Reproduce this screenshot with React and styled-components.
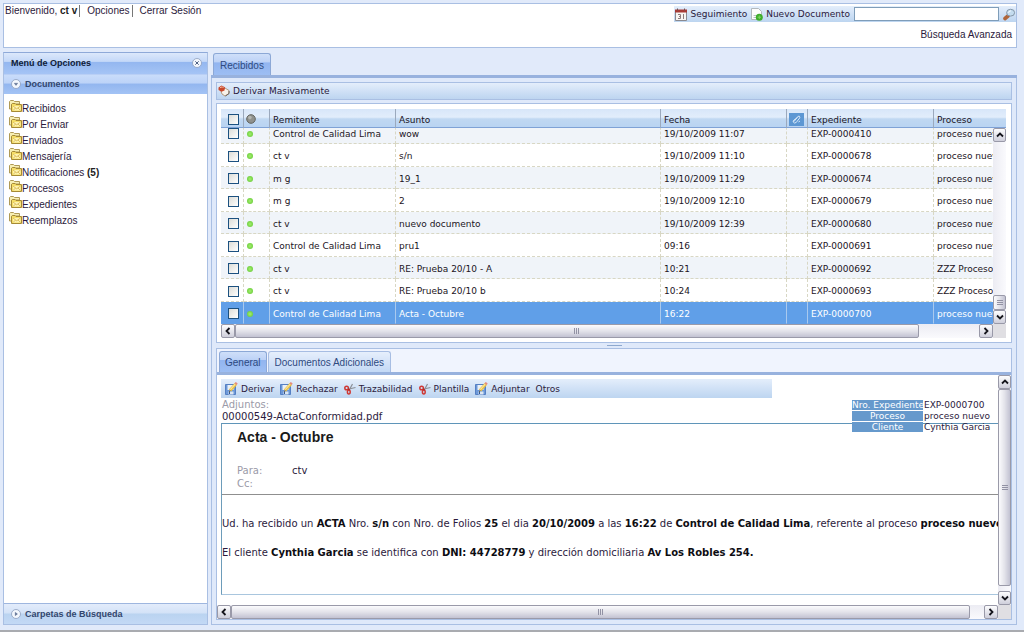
import React, { useLayoutEffect, useRef } from "react";
import styled, { createGlobalStyle } from "styled-components";

const arial = '"Liberation Sans", Arial, sans-serif';
const verdana = '"DejaVu Sans", Verdana, sans-serif';
const line = "#a9bfe3";
const barFill = "linear-gradient(#e4eefb, #d0e1f6 50%, #bdd5f0)";

const GlobalStyle = createGlobalStyle`
  * { box-sizing: border-box; }
  body { margin: 0; background: #e1eafa; font-family: ${arial}; font-size: 10px; line-height: 12px; color: #2b1a3c; }
  button { font: inherit; color: inherit; background: none; border: 0; padding: 0; cursor: pointer; }
  a { color: inherit; text-decoration: none; }
  h1, h2, p, dl, dd, dt, ul { margin: 0; padding: 0; }
`;

const Page = styled.div`
  display: flex;
  flex-direction: column;
  gap: 4px;
  min-height: 100vh;
  padding: 3px 7px 5px 3px;
  border-bottom: 2px solid #a9abb0;
`;

const Header = styled.header`
  display: flex;
  justify-content: space-between;
  height: 45px;
  background: #fff;
  border: 1px solid ${line};
`;

const UserNav = styled.nav`
  display: flex;
  align-items: center;
  height: 14px;
  padding-left: 1px;
  white-space: nowrap;
`;

const UserItem = styled.span`
  padding: 0 2px 0 ${(p) => (p.$first ? 0 : 7)}px;
  border-right: ${(p) => (p.$last ? "0" : "1px solid #777")};
  b { color: #222; }
`;

const HeaderTools = styled.div`
  display: flex;
  flex-direction: column;
  align-items: flex-end;
  gap: 7px;
  padding-top: 2px;
`;

const SearchBar = styled.form`
  display: flex;
  align-items: center;
  gap: 4px;
  height: 16px;
  padding-left: 1px;
  background: ${barFill};
  font-family: ${verdana};
  font-size: 9px;
`;

const SearchInput = styled.input`
  width: 145px;
  height: 14px;
  border: 1px solid #7f9db9;
  background: #fff;
  font: inherit;
`;

const AdvancedLink = styled.a`
  padding-right: 4px;
`;

const Toolbar = styled.div`
  display: flex;
  align-items: center;
  gap: ${(p) => p.$gap || 5}px;
  width: ${(p) => p.$width || "auto"};
  height: ${(p) => (p.$framed ? 18 : 19)}px;
  padding: 0 ${(p) => (p.$framed ? 1 : 4)}px;
  background: ${barFill};
  border: ${(p) => (p.$framed ? `1px solid ${line}` : "0")};
  font-family: ${verdana};
  font-size: 9px;
`;

const ToolButton = styled.button`
  display: flex;
  align-items: center;
  gap: 3px;
  white-space: nowrap;
`;

const Columns = styled.div`
  display: flex;
  flex: 1;
  gap: 3px;
  min-width: 0;
`;

const Sidebar = styled.aside`
  display: flex;
  flex-direction: column;
  flex: 0 0 205px;
  background: #fff;
  border: 1px solid ${line};
  border-top-color: #8ea9d8;
`;

const SidebarTitle = styled.div`
  display: flex;
  align-items: center;
  justify-content: space-between;
  height: 21px;
  padding: 0 5px 2px 7px;
  background: linear-gradient(#dce8fb, #c4d8f8 40%, #94b7f0 45%, #a5c4f5);
  h2 { font-size: 9px; font-weight: 700; color: #101c38; }
`;

const SectionButton = styled.button`
  display: flex;
  align-items: center;
  gap: 4px;
  width: 100%;
  height: ${(p) => (p.$open ? 20 : 21)}px;
  padding: 0 0 ${(p) => (p.$open ? 2 : 0)}px 7px;
  border-top: 1px solid ${(p) => (p.$open ? "#b9cff5" : "#9eb6df")};
  background: ${(p) =>
    p.$open
      ? "linear-gradient(#c9dcfa, #bdd3f8 42%, #93b6ef 48%, #a3c3f5)"
      : "linear-gradient(#e3ecfb, #d3e2f7 45%, #bad3f0 50%, #c3d9f5)"};
  font-size: 9px;
  font-weight: 700;
  color: #33466d;
`;

const FolderList = styled.ul`
  flex: 1;
  padding: 6px 0 0 5px;
  list-style: none;
`;

const FolderLink = styled.a`
  display: flex;
  align-items: flex-start;
  height: 16px;
  line-height: 18px;
  b { color: #222; white-space: pre; }
`;

const Main = styled.main`
  display: flex;
  flex-direction: column;
  flex: 1;
  min-width: 0;
`;

const TabStrip = styled.div`
  display: flex;
  align-items: flex-end;
  gap: 1px;
  height: 26px;
  padding: 0 2px;
  background: ${(p) => p.$fill || "none"};
  border-bottom: 3px solid #98b2de;
`;

const Tab = styled.button`
  height: ${(p) => p.$height}px;
  padding: 2px ${(p) => p.$inset || 6}px 0;
  border: 1px solid ${(p) => (p.$active ? "#8ca8d6" : "#a7bde3")};
  border-bottom: 0;
  border-radius: 3px 3px 0 0;
  background: ${(p) =>
    p.$active
      ? "linear-gradient(#cfdff9, #bdd2f6 38%, #92b5f0 42%, #9dbef3)"
      : "linear-gradient(#e6effc, #d6e4f9 45%, #c3d9f6)"};
  color: #2e4a80;
  white-space: nowrap;
`;

const Workspace = styled.div`
  display: flex;
  flex-direction: column;
  flex: 1;
  padding: 4px;
  border: 1px solid ${line};
  border-top: 0;
  background: #dfe9fa;
`;

const GridPanel = styled.section`
  margin-top: 3px;
  padding: 5px 5px 4px 4px;
  border: 1px solid ${line};
  background: #fff;
`;

const GridFrame = styled.div`
  display: grid;
  grid-template: 19px 196px 14px / minmax(0, 1fr) 13px;
`;

const GridViewport = styled.div`
  grid-area: 1 / 1 / 3 / 3;
  overflow: hidden;
`;

const Table = styled.table`
  width: calc(100% + 60px);
  border-collapse: separate;
  border-spacing: 0;
  table-layout: fixed;
  font-family: ${verdana};
  font-size: 9px;
  color: #1c1424;
`;

const Col = styled.col`
  width: ${(p) => (p.$width ? `${p.$width}px` : "auto")};
`;

const HeadCell = styled.th`
  position: sticky;
  top: 0;
  z-index: 1;
  height: 19px;
  padding: ${(p) => (p.$icon ? "2px 0 0 2px" : "4px 3px 0 3px")};
  border-right: 1px solid #9ba9bd;
  border-bottom: 1px solid #7fa2d6;
  background: linear-gradient(#d7e6f9, #e2edfb 45%, #c0d8f2 55%, #b9d4f2);
  font-weight: 400;
  text-align: left;
  white-space: nowrap;
  svg { display: block; }
`;

const Row = styled.tr`
  height: 22px;
  background: ${(p) => (p.$selected ? "#609fe8" : "#fff")};
  color: ${(p) => (p.$selected ? "#fff" : "inherit")};
  &:nth-child(even) { height: 23px; }
  &:nth-child(odd) { background: ${(p) => (p.$selected ? "#609fe8" : "#f0f4f9")}; }
  td {
    border-right-style: ${(p) => (p.$selected ? "solid" : "dashed")};
    border-right-color: ${(p) => (p.$selected ? "#a9c9ee" : "#d8d7c4")};
    border-bottom-color: ${(p) => (p.$selected ? "#609fe8" : "#d8d7c4")};
  }
`;

const Cell = styled.td`
  padding: 2px 0 0 3px;
  border-right: 1px dashed #d8d7c4;
  border-bottom: 1px dashed #d8d7c4;
  overflow: hidden;
  white-space: nowrap;
`;

const Check = styled.input`
  appearance: none;
  display: block;
  width: 11px;
  height: 11px;
  margin: 0 auto;
  border: 1px solid #1c5180;
  background: linear-gradient(135deg, #dcdcd7, #fff);
`;

const Dot = styled.span`
  display: block;
  width: 6px;
  height: 6px;
  border-radius: 50%;
  background: radial-gradient(#a5ee70, #5cc52e);
`;

const BarTrack = styled.div`
  grid-area: ${(p) => p.$area};
  display: flex;
  flex-direction: ${(p) => (p.$vertical ? "column" : "row")};
  background: linear-gradient(${(p) => (p.$vertical ? "90deg" : "180deg")}, #ececf3, #fafafd);
`;

const ArrowButton = styled.button`
  display: flex;
  align-items: center;
  justify-content: center;
  flex: 0 0 14px;
  border: 1px solid #9999a8;
  border-radius: 2px;
  background: linear-gradient(#fdfdfe, #cfcfdb);
`;

const Thumb = styled.div`
  display: flex;
  align-items: center;
  justify-content: center;
  flex: ${(p) => p.$grow} 1 0;
  border: 1px solid #9a9aa9;
  border-radius: 2px;
  background: linear-gradient(${(p) => (p.$vertical ? "90deg" : "180deg")}, #fbfbfd, #e3e3ea 50%, #c2c2d2);
`;

const Gap = styled.div`
  flex: ${(p) => p.$grow} 1 0;
`;

const Corner = styled.div`
  grid-area: ${(p) => p.$area};
  background: #e0dfe3;
`;

const Splitter = styled.div`
  display: flex;
  align-items: center;
  justify-content: center;
  height: 5px;
  &::before { content: ""; width: 15px; height: 1px; background: #8ea9cf; }
`;

const DetailPanel = styled.section`
  display: flex;
  flex-direction: column;
  flex: 1;
  border: 1px solid ${line};
  background: #fff;
`;

const DetailFrame = styled.div`
  display: grid;
  flex: 1;
  grid-template: minmax(0, 1fr) 14px / minmax(0, 1fr) 13px;
`;

const DetailBody = styled.div`
  position: relative;
  padding: 4px 0 0 4px;
  overflow: hidden;
  font-family: ${verdana};
`;

const Attachments = styled.div`
  padding: 1px 0 0 1px;
  color: #9a9aa8;
  a { display: block; color: #2b1a3c; }
`;

const Facts = styled.dl`
  position: absolute;
  top: 25px;
  right: 5px;
  display: grid;
  grid-template-columns: 71px 69px;
  gap: 1px;
  font-size: 9px;
  line-height: 10px;
  white-space: nowrap;
  dt { background: #6699cc; color: #fff; text-align: center; }
`;

const Letter = styled.article`
  height: 172px;
  border: 1px solid #a9c6de;
  border-width: 1px 0 1px 1px;
  border-top-color: #5f95b9;
  border-left-color: #6d9cba;
`;

const LetterHead = styled.div`
  height: 71px;
  padding: 5px 0 0 15px;
  border-bottom: 1px solid #8f8f8f;
  h1 { font-family: ${arial}; font-size: 14px; line-height: 16px; color: #1a1a1a; }
`;

const Recipients = styled.dl`
  display: grid;
  grid-template-columns: 55px auto;
  padding-top: 19px;
  line-height: 13px;
  dt { color: #9a9aa8; }
`;

const Paragraph = styled.p`
  padding-top: ${(p) => p.$space}px;
  line-height: 13px;
  white-space: nowrap;
  b { color: #0d0d12; }
`;

const FolderIcon = () => (
  <svg width="13" height="13" viewBox="0 0 13 13" aria-hidden="true">
    <path d="M.5 9V1.500L1.500.5H4.500L5.500 1.500H10.500V4H3V9Z" fill="#f7efb4" stroke="#b09a55" />
    <path d="M2.500 11.500V4.300L3.500 3.500H6L7 4.500H12.500V11.500Z" fill="#f6df68" stroke="#a58a35" />
    <path d="M4 6H11.500V10.500H4Z" fill="#fdf3b0" />
    <path d="M4 6L7.700 8.800L11.500 6M4 10.500L6.500 8M11.500 10.500L9 8" fill="none" stroke="#d3b04a" strokeWidth=".8" />
  </svg>
);

const CalendarIcon = () => (
  <svg width="12" height="13" viewBox="0 0 12 13" aria-hidden="true">
    <path d="M.5 2.500H11.500V12.500H.5Z" fill="#f8f5f2" stroke="#8a8a90" />
    <path d="M0 1.500H12V4.500H0Z" fill="#a83a36" />
    <path d="M2.500.5V2.500M9.500.5V2.500" stroke="#6c5552" />
    <path d="M3 6.500H5.500V10.500H3M4 8.500H5.500M8.500 6V11" fill="none" stroke="#8c7b7c" />
  </svg>
);

const NewDocIcon = () => (
  <svg width="12" height="13" viewBox="0 0 12 13" aria-hidden="true">
    <path d="M.5.5H7.500L10.500 3.500V11.500H.5Z" fill="#fdfdfd" stroke="#b3b9bd" />
    <path d="M2.500 7.500H7M2.500 9.500H5" stroke="#b9bec5" />
    <circle cx="8.300" cy="9.200" r="3.500" fill="#3fae2c" />
    <path d="M8.300 7.500V11M6.600 9.200H10" stroke="#7fd564" />
  </svg>
);

const SearchIcon = () => (
  <svg width="13" height="13" viewBox="0 0 13 13" aria-hidden="true">
    <path d="M2 10.500L5 8" stroke="#b0653a" strokeWidth="3.600" strokeLinecap="round" />
    <ellipse cx="7.600" cy="4.700" rx="4" ry="3.400" fill="#c4dcef" stroke="#8496a8" />
    <path d="M5.600 4.700A2.200 2 0 0 1 7.800 2.900" fill="none" stroke="#fff" />
  </svg>
);

const ForwardIcon = () => (
  <svg width="12" height="12" viewBox="0 0 12 12" aria-hidden="true">
    <path d="M3 6.500L7 3L11 5.500V8.500L7 11L4 9Z" fill="#f8f2ea" stroke="#b39a80" />
    <path d="M.5 2.500L3.500.4L7 2.300L6.500 5.500L3.500 6.800L.5 5Z" fill="#c8482c" />
    <path d="M2 2.700L4.300 1.800L5.500 3" stroke="#f3b79c" fill="none" />
    <path d="M7.500 11L11 8.500V6" fill="none" stroke="#6b6158" />
  </svg>
);

const EditIcon = () => (
  <svg width="13" height="13" viewBox="0 0 13 13" aria-hidden="true">
    <path d="M.5 2.500H10.500V12.500H.5Z" fill="#6c98d8" stroke="#5580c4" />
    <path d="M2.500 3H8.500V8H2.500Z" fill="#e9f0f7" />
    <path d="M3.500 9.500H8.500V12.500H3.500Z" fill="#dbe6f3" />
    <path d="M4.500 10V12" stroke="#34568f" />
    <path d="M5 8.500L10.800 2" stroke="#e9be42" strokeWidth="3" />
    <path d="M5.300 7.700L10.200 2.200" stroke="#fbe695" strokeWidth="1.200" />
    <path d="M10.500 2.200L11.800.8" stroke="#e58b7c" strokeWidth="2.600" />
    <path d="M4 9.700L5.300 8.800" stroke="#6a5432" />
  </svg>
);

const CutIcon = () => (
  <svg width="12" height="12" viewBox="0 0 12 12" aria-hidden="true">
    <path d="M5.500 6.500L8.500 1M5 6L11.500 4.500" stroke="#8b8f96" strokeWidth="1.200" />
    <circle cx="2.600" cy="5" r="1.800" fill="none" stroke="#cf3834" strokeWidth="1.500" />
    <ellipse cx="4.800" cy="9" rx="1.400" ry="2" fill="none" stroke="#cf3834" strokeWidth="1.500" />
    <path d="M4 6L5.800 7" stroke="#b32e2c" strokeWidth="1.500" />
  </svg>
);

const ClipIcon = () => (
  <svg width="15" height="13" viewBox="0 0 15 13" aria-hidden="true">
    <rect width="15" height="13" fill="#5d97d3" />
    <path d="M5 8.500L9 3.300Q11 2.500 10.800 4.800L7.200 9.500Q5.200 10.800 4.200 9Q4 8 5 7L8.500 4.500M9.500 9L11 8" fill="none" stroke="#e2eefa" strokeWidth=".9" />
  </svg>
);

const BallIcon = () => (
  <svg width="10" height="10" viewBox="0 0 10 10" aria-hidden="true">
    <circle cx="5" cy="5" r="4.300" fill="#8f918d" stroke="#62645f" />
    <circle cx="3.900" cy="3.600" r="1.800" fill="#b4b6b1" />
  </svg>
);

const round = {
  close: "M3.300 3.300L6.700 6.700M6.700 3.300L3.300 6.700",
  open: "M3.200 4.200H6.800L5 6.500Z",
  shut: "M4.200 3.200V6.800L6.500 5Z",
};

const RoundIcon = ({ kind }) => (
  <svg width="10" height="10" viewBox="0 0 10 10" aria-hidden="true">
    <circle cx="5" cy="5" r="4.500" fill="#f3f7fd" stroke="#8b9dbd" strokeWidth=".8" />
    <path d={round[kind]} fill={kind === "close" ? "none" : "#5b6f94"} stroke="#4d5f82" strokeWidth={kind === "close" ? 1 : 0.3} />
  </svg>
);

const chevrons = {
  up: "M1 5.500L4 2.500L7 5.500",
  down: "M1 2.500L4 5.500L7 2.500",
  left: "M5.500 1L2.500 4L5.500 7",
  right: "M2.500 1L5.500 4L2.500 7",
};

const Arrow = ({ dir, label }) => (
  <ArrowButton type="button" aria-label={label}>
    <svg width="8" height="8" viewBox="0 0 8 8" aria-hidden="true">
      <path d={chevrons[dir]} fill="none" stroke="#15151c" strokeWidth="1.800" />
    </svg>
  </ArrowButton>
);

const Grip = ({ vertical }) => (
  <svg width="6" height="6" viewBox="0 0 6 6" aria-hidden="true">
    <path d={vertical ? "M0 .5H6M0 2.500H6M0 4.500H6" : "M.5 0V6M2.500 0V6M4.500 0V6"} stroke="#9292a4" />
  </svg>
);

const ScrollBar = ({ vertical, area, before = 0, thumb, after = 0 }) => (
  <BarTrack $vertical={vertical} $area={area}>
    <Arrow dir={vertical ? "up" : "left"} label={vertical ? "Subir" : "Izquierda"} />
    {before > 0 && <Gap $grow={before} />}
    <Thumb $vertical={vertical} $grow={thumb}>
      <Grip vertical={vertical} />
    </Thumb>
    {after > 0 && <Gap $grow={after} />}
    <Arrow dir={vertical ? "down" : "right"} label={vertical ? "Bajar" : "Derecha"} />
  </BarTrack>
);

const folders = [
  ["Recibidos"],
  ["Por Enviar"],
  ["Enviados"],
  ["Mensajería"],
  ["Notificaciones", " (5)"],
  ["Procesos"],
  ["Expedientes"],
  ["Reemplazos"],
];

const documents = [
  ["Control de Calidad Lima", "wow", "19/10/2009 11:07", "EXP-0000410", "proceso nuevo"],
  ["ct v", "s/n", "19/10/2009 11:10", "EXP-0000678", "proceso nuevo"],
  ["m g", "19_1", "19/10/2009 11:29", "EXP-0000674", "proceso nuevo"],
  ["m g", "2", "19/10/2009 12:10", "EXP-0000679", "proceso nuevo"],
  ["ct v", "nuevo documento", "19/10/2009 12:39", "EXP-0000680", "proceso nuevo"],
  ["Control de Calidad Lima", "pru1", "09:16", "EXP-0000691", "proceso nuevo"],
  ["ct v", "RE: Prueba 20/10 - A", "10:21", "EXP-0000692", "ZZZ Proceso"],
  ["ct v", "RE: Prueba 20/10 b", "10:24", "EXP-0000693", "ZZZ Proceso"],
  ["Control de Calidad Lima", "Acta - Octubre", "16:22", "EXP-0000700", "proceso nuevo"],
];

const actions = [
  ["Derivar", EditIcon],
  ["Rechazar", EditIcon],
  ["Trazabilidad", CutIcon],
  ["Plantilla", CutIcon],
  ["Adjuntar", EditIcon],
  ["Otros", null],
];

function DocumentGrid() {
  const viewport = useRef(null);

  // The newest document is the last row, so the list opens scrolled to its end.
  useLayoutEffect(() => {
    viewport.current.scrollTop = viewport.current.scrollHeight;
  }, []);

  return (
    <GridFrame>
      <GridViewport ref={viewport}>
        <Table>
          <colgroup>
            <Col $width={23} />
            <Col $width={26} />
            <Col $width={126} />
            <Col />
            <Col $width={126} />
            <Col $width={21} />
            <Col $width={126} />
            <Col $width={132} />
          </colgroup>
          <thead>
            <tr>
              <HeadCell $icon><Check type="checkbox" aria-label="Seleccionar todo" /></HeadCell>
              <HeadCell $icon aria-label="Estado"><BallIcon /></HeadCell>
              <HeadCell>Remitente</HeadCell>
              <HeadCell>Asunto</HeadCell>
              <HeadCell>Fecha</HeadCell>
              <HeadCell $icon aria-label="Adjunto"><ClipIcon /></HeadCell>
              <HeadCell>Expediente</HeadCell>
              <HeadCell>Proceso</HeadCell>
            </tr>
          </thead>
          <tbody>
            {documents.map(([from, subject, date, file, process], i) => (
              <Row key={file} $selected={i === documents.length - 1}>
                <Cell><Check type="checkbox" aria-label={`Seleccionar ${file}`} /></Cell>
                <Cell><Dot /></Cell>
                <Cell>{from}</Cell>
                <Cell>{subject}</Cell>
                <Cell>{date}</Cell>
                <Cell />
                <Cell>{file}</Cell>
                <Cell>{process}</Cell>
              </Row>
            ))}
          </tbody>
        </Table>
      </GridViewport>
      <ScrollBar vertical area="2 / 2" before={155} thumb={13} />
      <ScrollBar area="3 / 1" thumb={685} after={60} />
      <Corner $area="3 / 2" />
    </GridFrame>
  );
}

export default function App() {
  return (
    <>
      <GlobalStyle />
      <Page>
        <Header>
          <UserNav>
            <UserItem $first>Bienvenido, <b>ct v</b></UserItem>
            <UserItem><a href="#opciones">Opciones</a></UserItem>
            <UserItem $last><a href="#salir">Cerrar Sesión</a></UserItem>
          </UserNav>
          <HeaderTools>
            <SearchBar role="search">
              <ToolButton type="button"><CalendarIcon />Seguimiento</ToolButton>
              <ToolButton type="button"><NewDocIcon />Nuevo Documento</ToolButton>
              <SearchInput type="text" aria-label="Buscar" />
              <ToolButton type="submit" aria-label="Buscar"><SearchIcon /></ToolButton>
            </SearchBar>
            <AdvancedLink href="#busqueda">Búsqueda Avanzada</AdvancedLink>
          </HeaderTools>
        </Header>

        <Columns>
          <Sidebar>
            <SidebarTitle>
              <h2>Menú de Opciones</h2>
              <ToolButton type="button" aria-label="Cerrar menú"><RoundIcon kind="close" /></ToolButton>
            </SidebarTitle>
            <SectionButton type="button" $open><RoundIcon kind="open" />Documentos</SectionButton>
            <FolderList>
              {folders.map(([name, count]) => (
                <li key={name}>
                  <FolderLink href="#carpeta">
                    <FolderIcon />
                    {name}
                    {count && <b>{count}</b>}
                  </FolderLink>
                </li>
              ))}
            </FolderList>
            <SectionButton type="button"><RoundIcon kind="shut" />Carpetas de Búsqueda</SectionButton>
          </Sidebar>

          <Main>
            <TabStrip>
              <Tab type="button" $active $height={22}>Recibidos</Tab>
            </TabStrip>
            <Workspace>
              <Toolbar $framed>
                <ToolButton type="button"><ForwardIcon />Derivar Masivamente</ToolButton>
              </Toolbar>
              <GridPanel>
                <DocumentGrid />
              </GridPanel>
              <Splitter />
              <DetailPanel>
                <TabStrip $fill="#f0f4fe">
                  <Tab type="button" $active $height={21} $inset={5}>General</Tab>
                  <Tab type="button" $height={21}>Documentos Adicionales</Tab>
                </TabStrip>
                <DetailFrame>
                  <DetailBody>
                    <Toolbar $width="551px" $gap={6}>
                      {actions.map(([label, Icon]) => (
                        <ToolButton type="button" key={label}>{Icon && <Icon />}{label}</ToolButton>
                      ))}
                    </Toolbar>
                    <Attachments>
                      Adjuntos:
                      <a href="#adjunto">00000549-ActaConformidad.pdf</a>
                    </Attachments>
                    <Letter>
                      <LetterHead>
                        <h1>Acta - Octubre</h1>
                        <Recipients>
                          <dt>Para:</dt>
                          <dd>ctv</dd>
                          <dt>Cc:</dt>
                        </Recipients>
                      </LetterHead>
                      <Paragraph $space={22}>
                        Ud. ha recibido un <b>ACTA</b> Nro. <b>s/n</b> con Nro. de Folios <b>25</b> el dia <b>20/10/2009</b> a las{" "}
                        <b>16:22</b> de <b>Control de Calidad Lima</b>, referente al proceso <b>proceso nuevo</b>
                      </Paragraph>
                      <Paragraph $space={16}>
                        El cliente <b>Cynthia Garcia</b> se identifica con <b>DNI: 44728779</b> y dirección domiciliaria{" "}
                        <b>Av Los Robles 254.</b>
                      </Paragraph>
                    </Letter>
                    <Facts>
                      <dt>Nro. Expediente</dt>
                      <dd>EXP-0000700</dd>
                      <dt>Proceso</dt>
                      <dd>proceso nuevo</dd>
                      <dt>Cliente</dt>
                      <dd>Cynthia Garcia</dd>
                    </Facts>
                  </DetailBody>
                  <ScrollBar vertical area="1 / 2" thumb={200} after={5} />
                  <ScrollBar area="2 / 1" thumb={740} after={14} />
                  <Corner $area="2 / 2" />
                </DetailFrame>
              </DetailPanel>
            </Workspace>
          </Main>
        </Columns>
      </Page>
    </>
  );
}
